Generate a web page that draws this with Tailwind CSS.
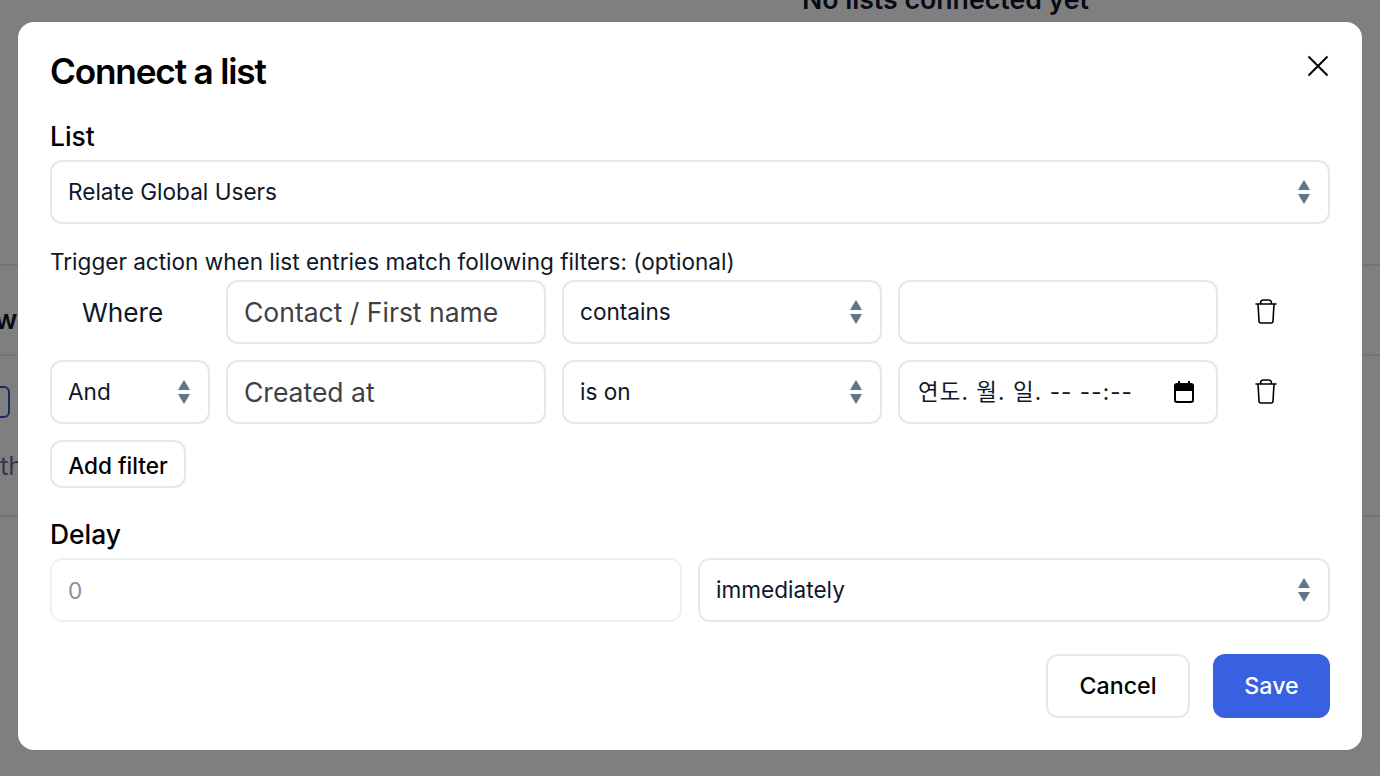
<!doctype html>
<html lang="en">
<head>
	<meta charset="UTF-8">
	<script src="https://cdn.jsdelivr.net/npm/@tailwindcss/browser@4"></script>
	<title>Connect a list</title>
</head>
<body class="relative w-[1380px] h-[776px] overflow-hidden bg-white font-['Inter',sans-serif] text-black">

<!-- page behind the modal -->
<div class="absolute inset-0">
	<div class="absolute left-[802px] top-[-21px] text-[26.7px] font-semibold text-[#0f172a] whitespace-nowrap">No lists connected yet</div>
	<div class="absolute left-0 right-0 top-[264px] h-[2px] bg-[#e2e8f0]"></div>
	<div class="absolute left-[-5px] top-[300px] text-[26.6px] font-semibold text-[#0f172a]">w</div>
	<div class="absolute left-0 right-0 top-[354px] h-[2px] bg-[#e2e8f0]"></div>
	<div class="absolute left-[-20px] top-[386px] w-[30px] h-[32px] rounded-[6px] border-2 border-[#2f55c9]"></div>
	<div class="absolute left-0 top-[447px] text-[25.6px] text-[#64748b]">th</div>
	<div class="absolute left-0 right-0 top-[515px] h-[2px] bg-[#e2e8f0]"></div>
</div>
<div class="absolute inset-0 bg-black/50"></div>

<!-- modal -->
<div class="absolute left-[18px] top-[22px] w-[1344px] h-[728px] bg-white rounded-2xl p-8 flex flex-col">
	<button class="absolute right-[32px] top-[32px] w-6 h-6 flex items-center justify-center">
		<svg width="24" height="24" viewBox="0 0 24 24" fill="none" stroke="#000" stroke-width="2"><path d="M2.5 2.5l19 19M21.5 2.5l-19 19"/></svg>
	</button>

	<h2 class="text-[35.2px] leading-[40px] font-semibold tracking-[-1.18px] mt-[-3px] h-[40px]">Connect a list</h2>

	<label class="text-[26.4px] leading-[32px] font-medium mt-[29px]">List</label>
	<div class="h-16 mt-2 border-2 border-[#e2e8f0] rounded-xl flex items-center justify-between pl-4 pr-[17px] text-[22.6px] text-[#0f172a]">
		<span>Relate Global Users</span>
		<svg width="14" height="24" viewBox="0 0 14 24" fill="#64748b"><path d="M7 0l6 10H1zM7 24L1 14h12z"/></svg>
	</div>

	<p class="text-[22.56px] leading-[28px] text-[#0f172a] mt-6">Trigger action when list entries match following filters: (optional)</p>

	<div class="flex items-center gap-4 mt-[4px]">
		<div class="w-40 pl-8 pt-[2px] text-[26.2px] text-[#0f172a]">Where</div>
		<div class="w-80 h-16 border-2 border-[#e2e8f0] rounded-xl flex items-center px-4 pt-[2px] text-[26.5px] text-[#3f3f46]">Contact / First name</div>
		<div class="w-80 h-16 border-2 border-[#e2e8f0] rounded-xl flex items-center justify-between pl-4 pr-[17px] text-[22.6px] text-[#0f172a]">
			<span>contains</span>
			<svg width="14" height="24" viewBox="0 0 14 24" fill="#64748b"><path d="M7 0l6 10H1zM7 24L1 14h12z"/></svg>
		</div>
		<div class="w-80 h-16 border-2 border-[#e2e8f0] rounded-xl"></div>
		<svg class="ml-[20px]" width="24" height="26" viewBox="0 0 24 26" fill="none" stroke="#000" stroke-width="1.600" stroke-linecap="round" stroke-linejoin="round"><path d="M2 5h20M6.500 5V4c0-2 1-3 3-3h5c2 0 3 1 3 3v1M4 5l1 17c0 1.500 1 2 2 2h10c1 0 2-.5 2-2l1-17"/></svg>
	</div>

	<div class="flex items-center gap-4 mt-4">
		<div class="w-40 h-16 border-2 border-[#e2e8f0] rounded-xl flex items-center justify-between pl-4 pr-[17px] text-[22.6px] text-[#0f172a]">
			<span>And</span>
			<svg width="14" height="24" viewBox="0 0 14 24" fill="#64748b"><path d="M7 0l6 10H1zM7 24L1 14h12z"/></svg>
		</div>
		<div class="w-80 h-16 border-2 border-[#e2e8f0] rounded-xl flex items-center px-4 pt-[2px] text-[26.5px] text-[#3f3f46]">Created at</div>
		<div class="w-80 h-16 border-2 border-[#e2e8f0] rounded-xl flex items-center justify-between pl-4 pr-[17px] text-[22.6px] text-[#0f172a]">
			<span>is on</span>
			<svg width="14" height="24" viewBox="0 0 14 24" fill="#64748b"><path d="M7 0l6 10H1zM7 24L1 14h12z"/></svg>
		</div>
		<div class="w-80 h-16 border-2 border-[#e2e8f0] rounded-xl flex items-center justify-between pl-[18px] pr-[22px] text-[22.4px] tracking-[1.1px] text-[#0f172a] font-['Inter','Noto_Sans_CJK_KR',sans-serif]">
			<span>연도. 월. 일. -- --:--</span>
			<svg width="20" height="22" viewBox="0 0 20 22" fill="none" stroke="#000" stroke-width="2"><rect x="1" y="3" width="18" height="18" rx="2"/><path d="M1 5h18v4H1z" fill="#000"/><path d="M5 0v3M15 0v3"/></svg>
		</div>
		<svg class="ml-[20px]" width="24" height="26" viewBox="0 0 24 26" fill="none" stroke="#000" stroke-width="1.600" stroke-linecap="round" stroke-linejoin="round"><path d="M2 5h20M6.500 5V4c0-2 1-3 3-3h5c2 0 3 1 3 3v1M4 5l1 17c0 1.500 1 2 2 2h10c1 0 2-.5 2-2l1-17"/></svg>
	</div>

	<button class="self-start h-12 mt-4 w-[136px] pt-[3px] border-2 border-[#e2e8f0] rounded-xl text-[22.6px] font-medium">Add filter</button>

	<label class="text-[26.4px] leading-[32px] font-medium mt-[30px]">Delay</label>
	<div class="grid grid-cols-2 gap-4 mt-2">
		<div class="h-16 border-2 border-[#edf2f7] rounded-xl flex items-center px-4 pt-[2px] text-[22.6px] text-[#8a8f98]">0</div>
		<div class="h-16 border-2 border-[#e2e8f0] rounded-xl flex items-center justify-between pl-4 pr-[17px] text-[22.6px] text-[#0f172a]">
			<span>immediately</span>
			<svg width="14" height="24" viewBox="0 0 14 24" fill="#64748b"><path d="M7 0l6 10H1zM7 24L1 14h12z"/></svg>
		</div>
	</div>

	<div class="flex justify-end gap-[23px] mt-8">
		<button class="h-16 w-[144px] border-2 border-[#e2e8f0] rounded-xl text-[23.2px] font-medium">Cancel</button>
		<button class="h-16 w-[117px] bg-[#3861e2] rounded-xl text-[23.2px] font-medium text-white">Save</button>
	</div>
</div>
</body>
</html>
